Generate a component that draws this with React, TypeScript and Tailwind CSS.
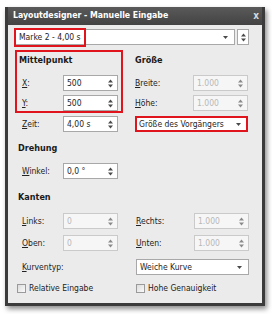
import React from "react";

function Spin({ c = "#4a4a4a" }: { c?: string }) {
  return (
    <svg width="5" height="9" viewBox="0 0 5 9">
      <path d="M2.5 0.5L5 3.5H0z" fill={c} />
      <path d="M0 5.5h5L2.5 8.5z" fill={c} />
    </svg>
  );
}

function Arrow() {
  return (
    <svg width="5" height="3" viewBox="0 0 5 3">
      <path d="M0 0h5L2.5 3z" fill="#4a4a4a" />
    </svg>
  );
}

function Input({ value, disabled }: { value: string; disabled?: boolean }) {
  return (
    <div
      className={
        disabled
          ? "flex h-[16px] w-[55px] items-center justify-between border border-[#cacaca] bg-[#f6f6f6] pl-[3px] pr-[4px] text-[#b8b8b8]"
          : "flex h-[16px] w-[55px] items-center justify-between border border-[#a8a8a8] bg-white pl-[3px] pr-[4px] text-[#1e1e1e]"
      }
    >
      <span className="leading-none">{value}</span>
      <Spin c={disabled ? "#8a8a8a" : "#4a4a4a"} />
    </div>
  );
}

function Label({ first, rest, w }: { first: string; rest: string; w: string }) {
  return (
    <span className={w + " leading-none text-[#222]"}>
      <span className="underline underline-offset-[1px]">{first}</span>
      {rest}
    </span>
  );
}

function Heading({ children }: { children: React.ReactNode }) {
  return (
    <div className="flex h-[18px] items-center text-[9px] font-bold text-[#1a1a1a]">{children}</div>
  );
}

function Check({ label }: { label: string }) {
  return (
    <div className="flex items-center gap-[3px]">
      <div className="h-[9px] w-[9px] border border-[#9a9a9a] bg-gradient-to-br from-[#dcdcdc] to-[#fafafa]" />
      <span className="leading-none text-[#222]">{label}</span>
    </div>
  );
}

export default function App() {
  return (
    <div className="h-[314px] w-[272px] bg-white pl-[5px] pt-[7px] font-['DejaVu_Sans_Condensed','Liberation_Sans',sans-serif] text-[8.5px]">
      <div className="flex h-[299px] w-[260px] flex-col bg-[#3b3b3b] px-[3px] pb-[3px] shadow-[2px_3px_5px_rgba(0,0,0,0.45)]">
        <div className="flex h-[18px] items-center justify-between bg-gradient-to-b from-[#5a5a5a] to-[#434343] pl-[5px] pr-[3px]">
          <span className="text-[8.7px] font-bold text-white">Layoutdesigner - Manuelle Eingabe</span>
          <span className="text-[10px] font-bold leading-none text-[#d8d8d8]">x</span>
        </div>
        <div className="flex flex-1 flex-col bg-[#ebebeb] pl-[7px] pt-[4px]">
          {/* top dropdown row */}
          <div className="flex h-[16px] gap-[2px]">
            <div className="relative flex w-[220px] items-center justify-between border border-[#a8a8a8] bg-white pl-[3px] pr-[6px]">
              <span className="leading-none text-[#1e1e1e]">Marke 2 - 4,00 s</span>
              <Arrow />
              <div className="absolute left-[-2px] top-[-2px] h-[19px] w-[72px] border-2 border-[#e0141c]" />
            </div>
            <div className="flex w-[12px] items-center justify-center border border-[#a8a8a8] bg-white">
              <Spin />
            </div>
          </div>

          {/* Mittelpunkt / Größe */}
          <div className="mt-[5px] flex">
            <div className="w-[120px]">
              <div className="w-[108px] border-2 border-[#e0141c] pl-[2px]">
                <Heading>Mittelpunkt</Heading>
                <div className="mt-[5px] flex items-center pl-[3px]">
                  <Label first="X" rest=":" w="w-[41px]" />
                  <Input value="500" />
                </div>
                <div className="mt-[4px] flex items-center pl-[3px]">
                  <Label first="Y" rest=":" w="w-[41px]" />
                  <Input value="500" />
                </div>
              </div>
              <div className="mt-[3px] flex items-center pl-[7px]">
                <Label first="Z" rest="eit:" w="w-[41px]" />
                <Input value="4,00 s" />
              </div>
            </div>
            <div className="pt-[2px]">
              <Heading>Größe</Heading>
              <div className="mt-[5px] flex items-center">
                <Label first="B" rest="reite:" w="w-[58px]" />
                <Input value="1.000" disabled />
              </div>
              <div className="mt-[4px] flex items-center">
                <Label first="H" rest="öhe:" w="w-[58px]" />
                <Input value="1.000" disabled />
              </div>
              <div className="mt-[5px] flex h-[16px] w-[113px] items-center justify-between border-2 border-[#e0141c] bg-white pl-[2px] pr-[5px]">
                <span className="whitespace-nowrap leading-none text-[#1e1e1e]">Größe des Vorgängers</span>
                <Arrow />
              </div>
            </div>
          </div>

          {/* Drehung */}
          <div className="mt-[8px] pl-[3px]">
            <Heading>Drehung</Heading>
            <div className="mt-[5px] flex items-center pl-[4px]">
              <Label first="W" rest="inkel:" w="w-[41px]" />
              <Input value="0,0 °" />
            </div>
          </div>

          {/* Kanten */}
          <div className="mt-[10px] pl-[3px]">
            <Heading>Kanten</Heading>
            <div className="mt-[6px] flex items-center pl-[4px]">
              <Label first="L" rest="inks:" w="w-[41px]" />
              <Input value="0" disabled />
              <div className="w-[18px]" />
              <Label first="R" rest="echts:" w="w-[58px]" />
              <Input value="1.000" disabled />
            </div>
            <div className="mt-[6px] flex items-center pl-[4px]">
              <Label first="O" rest="ben:" w="w-[41px]" />
              <Input value="0" disabled />
              <div className="w-[18px]" />
              <Label first="U" rest="nten:" w="w-[58px]" />
              <Input value="1.000" disabled />
            </div>
            <div className="mt-[8px] flex items-center pl-[4px]">
              <Label first="K" rest="urventyp:" w="w-[114px]" />
              <div className="flex h-[16px] w-[113px] items-center justify-between border border-[#a8a8a8] bg-white pl-[3px] pr-[6px]">
                <span className="leading-none text-[#1e1e1e]">Weiche Kurve</span>
                <Arrow />
              </div>
            </div>
          </div>

          {/* checkboxes */}
          <div className="mt-[9px] flex pl-[2px]">
            <div className="w-[119px]">
              <Check label="Relative Eingabe" />
            </div>
            <Check label="Hohe Genauigkeit" />
          </div>
        </div>
      </div>
    </div>
  );
}
